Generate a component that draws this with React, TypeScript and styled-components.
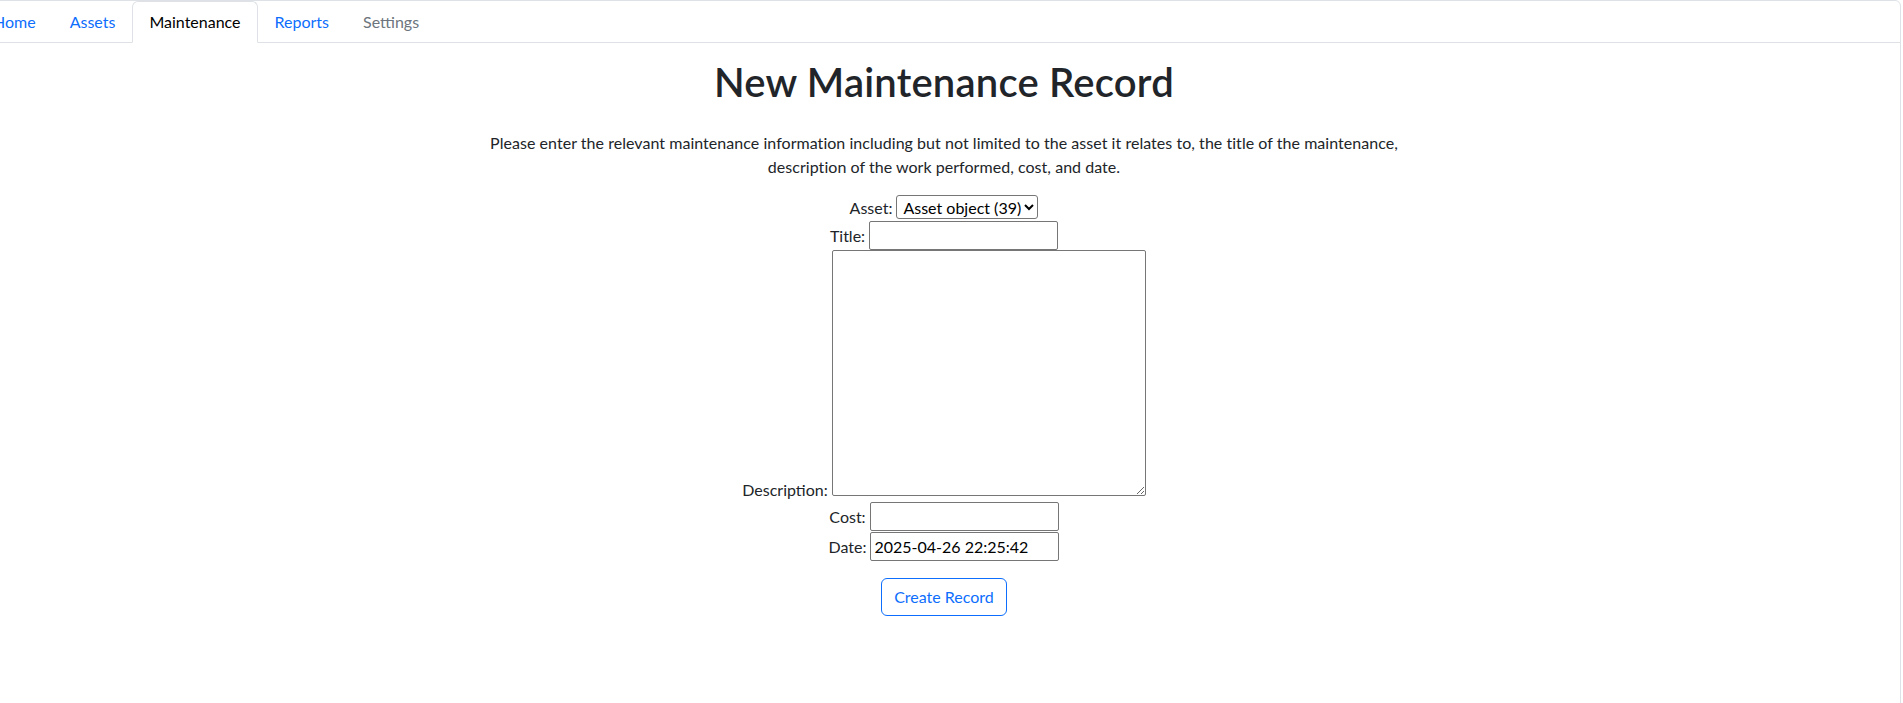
import React from "react";
import styled, { createGlobalStyle } from "styled-components";

const GlobalStyle = createGlobalStyle`
  *, *::before, *::after { box-sizing: border-box; }
  html, body { overflow: hidden; }
  body {
    margin: 0;
    font-family: Lato, "Noto Sans", "Liberation Sans", sans-serif;
    font-size: 16px;
    line-height: 1.5;
    color: #212529;
    background: #fff;
  }
`;

const Frame = styled.div`
  margin-left: -13px;
  width: 1914px;
  min-height: 720px;
  border: 1px solid #dee2e6;
  border-radius: 6px;
  background: #fff;
`;

const TabBar = styled.nav`
  display: flex;
  margin-left: -12px;
  border-bottom: 1px solid #dee2e6;
`;

const Tab = styled.a<{ $active?: boolean; $disabled?: boolean }>`
  display: block;
  margin-bottom: -1px;
  padding: 8px 16px;
  border: 1px solid transparent;
  border-top-left-radius: 6px;
  border-top-right-radius: 6px;
  font-size: 16px;
  line-height: 24px;
  text-decoration: none;
  cursor: pointer;
  color: ${(p) => (p.$active ? "#000" : p.$disabled ? "#6c757d" : "#0d6efd")};
  ${(p) =>
    p.$active &&
    `
    background: #fff;
    border-color: #dee2e6 #dee2e6 #fff;
  `}
`;

const Main = styled.main`
  display: flex;
  flex-direction: column;
  align-items: center;
  padding-top: 15px;
`;

const Heading = styled.h1`
  margin: 0 0 25px;
  font-size: 40px;
  font-weight: 600;
  line-height: 1.2;
  letter-spacing: 0.2px;
  color: #212529;
`;

const Intro = styled.p`
  max-width: 920px;
  margin: 0 0 16px;
  text-align: center;
  letter-spacing: 0.04px;
`;

const Form = styled.form`
  display: flex;
  flex-direction: column;
  align-items: center;
`;

const Field = styled.div<{ $h: number; $end?: boolean }>`
  display: flex;
  justify-content: center;
  align-items: ${(p) => (p.$end ? "flex-end" : "baseline")};
  gap: 4px;
  height: ${(p) => p.$h}px;
`;

const Label = styled.label`
  line-height: 24px;
  color: #212529;
  white-space: nowrap;
`;

const Select = styled.select`
  width: auto;
  height: 24px;
  padding: 0 0 0 2px;
  border: 1px solid #767676;
  border-radius: 3px;
  background: #fff;
  color: #000;
  font: inherit;
  font-size: 16px;
  line-height: normal;
`;

const TextInput = styled.input`
  width: 189px;
  height: 29px;
  padding: 0 3px;
  border: 1px solid #767676;
  border-radius: 2px;
  background: #fff;
  color: #000;
  font: inherit;
  font-size: 16px;
  line-height: normal;
`;

const TextArea = styled.textarea`
  width: 314px;
  height: 246px;
  margin-bottom: 6px;
  padding: 2px;
  border: 1px solid #767676;
  border-radius: 2px;
  background: #fff;
  color: #000;
  font: inherit;
  font-size: 16px;
`;

const SubmitButton = styled.button`
  margin-top: 17px;
  padding: 6px 12px;
  border: 1px solid #0d6efd;
  border-radius: 6px;
  background: transparent;
  color: #0d6efd;
  font: inherit;
  font-size: 16px;
  line-height: 24px;
  cursor: pointer;
`;

export default function App() {
  return (
    <>
      <GlobalStyle />
      <Frame>
        <TabBar>
          <Tab>Home</Tab>
          <Tab>Assets</Tab>
          <Tab $active>Maintenance</Tab>
          <Tab>Reports</Tab>
          <Tab $disabled>Settings</Tab>
        </TabBar>
        <Main>
          <Heading>New Maintenance Record</Heading>
          <Intro>
            Please enter the relevant maintenance information including but not limited to the asset it
            relates to, the title of the maintenance, description of the work performed, cost, and date.
          </Intro>
          <Form onSubmit={(e) => e.preventDefault()}>
            <Field $h={26}>
              <Label htmlFor="asset">Asset:</Label>
              <Select id="asset" defaultValue="39">
                <option value="39">Asset object (39)</option>
              </Select>
            </Field>
            <Field $h={29}>
              <Label htmlFor="title">Title:</Label>
              <TextInput id="title" type="text" />
            </Field>
            <Field $h={252} $end>
              <Label htmlFor="description">Description:</Label>
              <TextArea id="description" />
            </Field>
            <Field $h={30}>
              <Label htmlFor="cost">Cost:</Label>
              <TextInput id="cost" type="text" />
            </Field>
            <Field $h={29}>
              <Label htmlFor="date">Date:</Label>
              <TextInput id="date" type="text" defaultValue="2025-04-26 22:25:42" />
            </Field>
            <SubmitButton type="submit">Create Record</SubmitButton>
          </Form>
        </Main>
      </Frame>
    </>
  );
}
